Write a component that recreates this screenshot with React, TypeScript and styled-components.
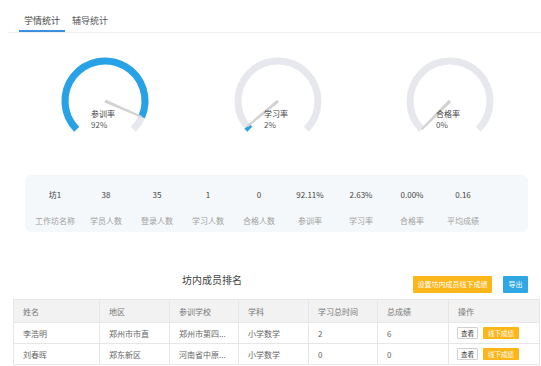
import React from "react";
import styled, { createGlobalStyle } from "styled-components";

const GlobalStyle = createGlobalStyle`
  html, body { margin: 0; padding: 0; background: #fff; }
  body {
    font-family: "Noto Sans CJK SC", "Liberation Sans", sans-serif;
    color: #333;
  }
`;

const Page = styled.div`
  width: 541px;
  overflow: hidden;
`;

const TabBar = styled.div`
  display: flex;
  gap: 2px;
  margin-left: 8px;
  padding-left: 11px;
  height: 33px;
  box-sizing: border-box;
  border-bottom: 1px solid #eef0f3;
`;

const Tab = styled.div<{ $active?: boolean }>`
  box-sizing: border-box;
  height: 32px;
  padding: 12px 5px 0;
  line-height: 18px;
  font-size: 9px;
  color: ${(p) => (p.$active ? "#444" : "#555")};
  border-bottom: 2px solid ${(p) => (p.$active ? "#3c8fde" : "transparent")};
`;

const GaugeRow = styled.div`
  display: flex;
  padding-left: 19px;
  height: 142px;
`;

const GaugeCell = styled.div`
  width: 172.5px;
  height: 142px;
  flex: none;
`;

const StatsPanel = styled.div`
  margin-left: 25px;
  width: 503px;
  height: 57px;
  box-sizing: border-box;
  padding: 13px 0 0 4.5px;
  background: #f5f8fa;
  border-radius: 6px;
  display: grid;
  grid-template-columns: repeat(9, 51px);
`;

const StatItem = styled.div`
  display: flex;
  flex-direction: column;
  align-items: center;
  gap: 12px;
`;

const StatValue = styled.div`
  font-size: 8px;
  line-height: 14px;
  color: #444;
  white-space: nowrap;
`;

const StatLabel = styled.div`
  font-size: 8px;
  line-height: 14px;
  color: #a0a0a0;
  white-space: nowrap;
`;

const RankHeader = styled.div`
  display: flex;
  align-items: flex-start;
  margin: 44px 0 0 13px;
  width: 515px;
  height: 17px;
`;

const RankTitle = styled.div`
  flex: 1;
  text-align: center;
  font-size: 10px;
  line-height: 10px;
  margin-top: -1px;
  color: #444;
`;

const ActionButton = styled.div<{ $color: string; $width: number }>`
  width: ${(p) => p.$width}px;
  height: 17px;
  line-height: 17px;
  margin-left: ${(p) => (p.$width > 50 ? 2 : 11)}px;
  background: ${(p) => p.$color};
  color: #fff;
  font-size: 7px;
  text-align: center;
  border-radius: 1px;
  white-space: nowrap;
`;

const Table = styled.table`
  margin: 6px 0 0 13px;
  width: 527px;
  border-collapse: collapse;
  table-layout: fixed;
  font-size: 8px;
  color: #666;
`;

const HeadCell = styled.th<{ $w?: number }>`
  width: ${(p) => (p.$w ? `${p.$w}px` : "auto")};
  height: 23px;
  padding: 0 9px;
  box-sizing: border-box;
  text-align: left;
  font-weight: normal;
  background: #f2f2f2;
  border: 1px solid #e6e6e6;
  color: #777;
`;

const Cell = styled.td`
  height: 21px;
  padding: 0 9px;
  box-sizing: border-box;
  border: 1px solid #e6e6e6;
  white-space: nowrap;
  overflow: hidden;
  text-overflow: ellipsis;
`;

const OpCell = styled(Cell)`
  padding: 0 8px;
`;

const OpWrap = styled.div`
  display: flex;
  align-items: center;
  gap: 5px;
`;

const SmallButton = styled.span<{ $primary?: boolean }>`
  display: inline-block;
  box-sizing: border-box;
  height: 12px;
  line-height: ${(p) => (p.$primary ? 12 : 10)}px;
  padding: 0 ${(p) => (p.$primary ? 5 : 3)}px;
  font-size: 6.5px;
  background: ${(p) => (p.$primary ? "#fbb61a" : "#fff")};
  color: ${(p) => (p.$primary ? "#fff" : "#333")};
  border: ${(p) => (p.$primary ? "none" : "1px solid #d0d0d0")};
  border-radius: 1px;
`;

const BLUE = "#27a2e6";
const GREY = "#e6e8ed";

function Gauge({ label, value }: { label: string; value: number }) {
  const cx = 86;
  const cy = 68;
  const r = 40;
  const rad = (d: number) => (d * Math.PI) / 180;
  const pt = (d: number) => [cx + r * Math.cos(rad(d)), cy - r * Math.sin(rad(d))];
  const arc = (a: number, b: number) => {
    const [x1, y1] = pt(a);
    const [x2, y2] = pt(b);
    const large = a - b > 180 ? 1 : 0;
    return `M${x1.toFixed(2)} ${y1.toFixed(2)} A${r} ${r} 0 ${large} 1 ${x2.toFixed(2)} ${y2.toFixed(2)}`;
  };
  const vEnd = 225 - value * 270;
  const dx = Math.cos(rad(vEnd));
  const dy = -Math.sin(rad(vEnd));
  const nx = -dy;
  const ny = dx;
  const len = 40;
  const bw = 1.6;
  const tw = 1;
  const poly = [
    [cx + nx * bw, cy + ny * bw],
    [cx + dx * len + nx * tw, cy + dy * len + ny * tw],
    [cx + dx * len - nx * tw, cy + dy * len - ny * tw],
    [cx - nx * bw, cy - ny * bw],
  ]
    .map((p) => `${p[0].toFixed(2)},${p[1].toFixed(2)}`)
    .join(" ");
  return (
    <svg width="172" height="142" viewBox="0 0 172 142">
      <path d={arc(225, -45)} fill="none" stroke={GREY} strokeWidth={7} />
      {value > 0 && <path d={arc(225, vEnd)} fill="none" stroke={BLUE} strokeWidth={7} />}
      <polygon points={poly} fill="#d2d2d2" />
      <text x={cx - 14} y={cy + 15.5} fontSize="8" fill="#444">
        {label}
      </text>
      <text x={cx - 14} y={cy + 27} fontSize="8" fill="#555">
        {Math.round(value * 100)}%
      </text>
    </svg>
  );
}

const gauges = [
  { label: "参训率", value: 0.92 },
  { label: "学习率", value: 0.02 },
  { label: "合格率", value: 0 },
];

const stats = [
  ["坊1", "工作坊名称"],
  ["38", "学员人数"],
  ["35", "登录人数"],
  ["1", "学习人数"],
  ["0", "合格人数"],
  ["92.11%", "参训率"],
  ["2.63%", "学习率"],
  ["0.00%", "合格率"],
  ["0.16", "平均成绩"],
];

const rows = [
  ["李浩明", "郑州市市直", "郑州市第四中学", "小学数学", "2", "6"],
  ["刘春晖", "郑东新区", "河南省中原区实验", "小学数学", "0", "0"],
];

const truncate = (s: string) => (s.length > 5 ? s.slice(0, 5) + "..." : s);

export default function App() {
  return (
    <Page>
      <GlobalStyle />
      <TabBar>
        <Tab $active>学情统计</Tab>
        <Tab>辅导统计</Tab>
      </TabBar>
      <GaugeRow>
        {gauges.map((g) => (
          <GaugeCell key={g.label}>
            <Gauge label={g.label} value={g.value} />
          </GaugeCell>
        ))}
      </GaugeRow>
      <StatsPanel>
        {stats.map(([v, l]) => (
          <StatItem key={l}>
            <StatValue>{v}</StatValue>
            <StatLabel>{l}</StatLabel>
          </StatItem>
        ))}
      </StatsPanel>
      <RankHeader>
        <RankTitle>坊内成员排名</RankTitle>
        <ActionButton $color="#fbb61a" $width={79}>
          设置坊内成员线下成绩
        </ActionButton>
        <ActionButton $color="#2ea7e3" $width={25}>
          导出
        </ActionButton>
      </RankHeader>
      <Table>
        <thead>
          <tr>
            <HeadCell $w={86}>姓名</HeadCell>
            <HeadCell $w={70}>地区</HeadCell>
            <HeadCell $w={69}>参训学校</HeadCell>
            <HeadCell $w={70}>学科</HeadCell>
            <HeadCell $w={69}>学习总时间</HeadCell>
            <HeadCell $w={71}>总成绩</HeadCell>
            <HeadCell>操作</HeadCell>
          </tr>
        </thead>
        <tbody>
          {rows.map((r) => (
            <tr key={r[0]}>
              <Cell>{r[0]}</Cell>
              <Cell>{r[1]}</Cell>
              <Cell>{truncate(r[2])}</Cell>
              <Cell>{r[3]}</Cell>
              <Cell>{r[4]}</Cell>
              <Cell>{r[5]}</Cell>
              <OpCell>
                <OpWrap>
                  <SmallButton>查看</SmallButton>
                  <SmallButton $primary>线下成绩</SmallButton>
                </OpWrap>
              </OpCell>
            </tr>
          ))}
        </tbody>
      </Table>
    </Page>
  );
}
